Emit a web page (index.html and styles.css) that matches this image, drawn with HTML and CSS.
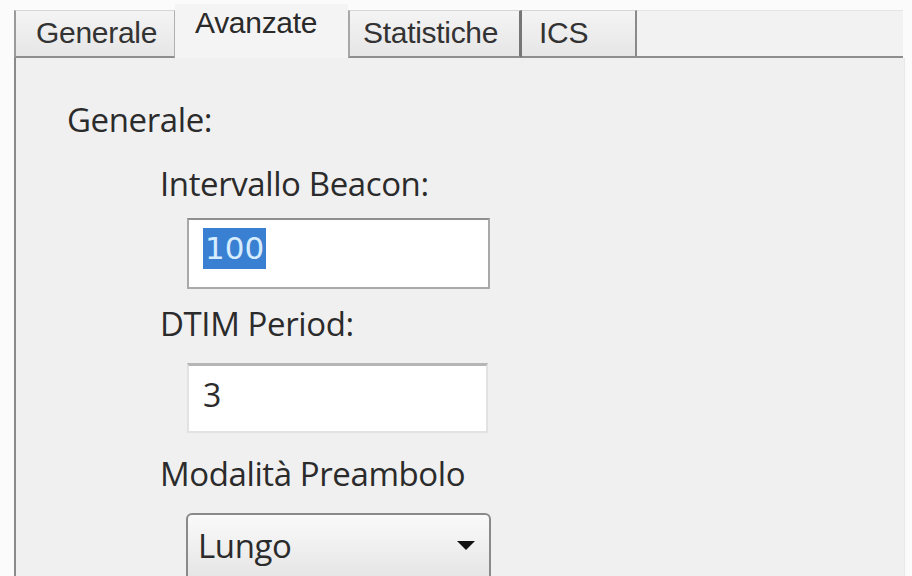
FILE: index.html
```html
<!DOCTYPE html>
<html lang="it">
<head>
    <meta charset="UTF-8">
    <title>Avanzate</title>
    <link rel="stylesheet" href="styles.css">
</head>
<body>
    <div class="dialog">
        <div class="tabs">
            <div class="tab tab-generale">Generale</div>
            <div class="tab tab-active">Avanzate</div>
            <div class="tab tab-stat">Statistiche</div>
            <div class="tab tab-ics">ICS</div>
            <div class="tab-fill"></div>
        </div>

        <div class="panel">
            <div class="group-title">Generale:</div>

            <div class="field">
                <label class="field-label lbl-beacon">Intervallo Beacon:</label>
                <div class="textbox tb-beacon"><span class="selected">100</span></div>

                <label class="field-label lbl-dtim">DTIM Period:</label>
                <div class="textbox tb-dtim"><span>3</span></div>

                <label class="field-label lbl-pre">Modalità Preambolo</label>
                <div class="combo">
                    <span>Lungo</span>
                    <span class="combo-arrow"></span>
                </div>
            </div>
        </div>
    </div>
</body>
</html>
```

FILE: styles.css
```css
/* Colori della finestra */
:root {
    --panel-bg: #f0f0f0;
    --tab-border: #9a9a9a;
    --text: #2b2b2b;
    --box-border: #a9a9a9;
    --select: #3a80d2;
}

* {
    box-sizing: border-box;
    margin: 0;
    padding: 0;
}

body {
    background: #fbfbfb;
    height: 576px;
    overflow: hidden;
    color: var(--text);
}

.dialog {
    padding-top: 10px;
    padding-left: 14px;
}

/* Linguette */
.tabs {
    display: flex;
    height: 48px;
    align-items: flex-end;
    font-family: 'Liberation Sans', Arial, sans-serif;
    font-size: 30px;
}

.tab {
    height: 48px;
    padding-top: 5px;
    background: linear-gradient(#f4f4f4, #e6e6e6);
    border-top: 1px solid #d6d6d6;
    border-left: 2px solid var(--tab-border);
    border-bottom: 2px solid #8e8e8e;
    color: #333;
    letter-spacing: -0.3px;
}

.tab-generale {
    width: 161px;
    padding-left: 20px;
    border-right: 1px solid #b0b0b0;
}

.tab-active {
    width: 173px;
    height: 54px;
    margin-top: -6px;
    padding-left: 20px;
    padding-top: 2px;
    background: #f4f4f4;
    border: none;
    color: #2a2a2a;
}

.tab-stat {
    width: 174px;
    padding-left: 13px;
    border-left: 2px solid #a8a8a8;
    border-right: 3px solid #767676;
}

.tab-ics {
    width: 115px;
    padding-left: 17px;
    border-left: none;
    border-right: 2px solid #8a8a8a;
}

.tab-fill {
    width: 266px;
    height: 48px;
    background: #f2f2f2;
    border-top: 1px solid #e4e4e4;
    border-bottom: 2px solid #8e8e8e;
}

/* Pannello */
.panel {
    width: 891px;
    height: 518px;
    background: var(--panel-bg);
    border-left: 2px solid #8a8a8a;
    border-right: 1px solid #e8e8e8;
    padding-left: 51px;
    padding-top: 42px;
    font-family: 'Open Sans', 'DejaVu Sans', sans-serif;
    font-size: 33px;
    line-height: 40px;
    letter-spacing: -0.4px;
}

.group-title {
    margin-bottom: 24px;
}

.field {
    padding-left: 93px;
    display: flex;
    flex-direction: column;
    align-items: flex-start;
}

.field-label {
    display: block;
}

.lbl-beacon { margin-bottom: 14px; }
.lbl-dtim { margin-top: 15px; margin-bottom: 19px; }
.lbl-pre { margin-top: 21px; margin-bottom: 19px; }

.textbox {
    width: 303px;
    height: 71px;
    margin-left: 27px;
    background: #fff;
    border: 2px solid var(--box-border);
    border-top-color: #8f8f8f;
    padding: 8px 0 0 14px;
    font-family: 'DejaVu Sans', sans-serif;
    font-size: 31px;
    line-height: 40px;
    letter-spacing: 0;
}

.tb-dtim {
    width: 301px;
    height: 70px;
    border: 2px solid #e2e2e2;
    border-top: 3px solid #b5b5b5;
    padding-top: 9px;
    font-family: 'Open Sans', sans-serif;
    font-size: 32px;
}

.selected {
    display: inline-block;
    background: var(--select);
    color: #d6ecff;
    padding: 0 2px;
    height: 41px;
}

/* Menu a tendina */
.combo {
    width: 305px;
    height: 70px;
    margin-left: 26px;
    display: flex;
    justify-content: space-between;
    padding: 11px 14px 0 10px;
    border: 2px solid #8a8a8a;
    border-radius: 6px;
    background: linear-gradient(#fafafa, #e4e4e4);
}

.combo-arrow {
    width: 0;
    height: 0;
    margin-top: 15px;
    border-left: 9px solid transparent;
    border-right: 9px solid transparent;
    border-top: 9px solid #111;
}
```
